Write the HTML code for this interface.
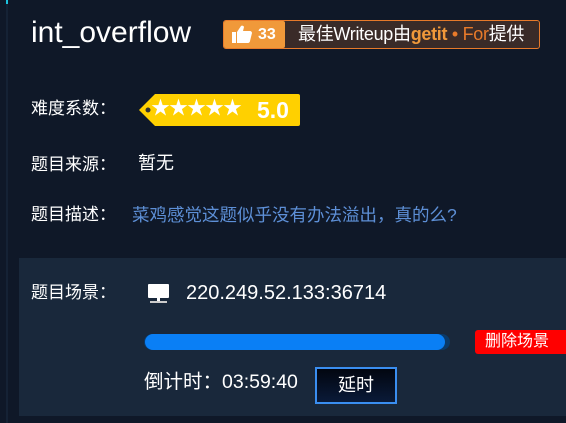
<!DOCTYPE html><html><head><meta charset="utf-8"><style>
body{margin:0;width:566px;height:423px;background:#0f1828;font-family:"Liberation Sans","Noto Sans CJK SC",sans-serif;color:#fff;position:relative;overflow:hidden}
.a{position:absolute;white-space:nowrap;line-height:1.2}
</style></head><body>
<div class="a" style="left:6px;top:0;width:2px;height:423px;background:#152235"></div>
<div class="a" style="left:6px;top:0;width:2px;height:4px;background:#1cc4e0"></div>
<div class="a" style="left:31px;top:15px;font-size:30px;">int_overflow</div>
<div class="a" style="left:223px;top:20px;width:317px;height:29px;border:1px solid #e87a2a;border-radius:3px;background:#3a2b28;box-sizing:border-box"></div>
<div class="a" style="left:224px;top:21px;width:61px;height:27px;background:#f0993a;border-radius:2px"></div>
<svg class="a" style="left:231px;top:24px" width="22" height="20" viewBox="0 0 22 20"><path d="M1 8h4v11H1z M6 8l4-6c1-1 3 0 3 1l-1 4h7c1 0 2 1 2 2l-2 8c0 1-1 2-2 2H6z" fill="#fff"/></svg>
<div class="a" style="left:258px;top:25px;font-size:16px;font-weight:bold">33</div>
<div class="a" style="left:298px;top:24px;font-size:18px;letter-spacing:-0.3px">最佳Writeup由<b style="color:#f0993a">getit</b><span style="color:#e87a2a"> • For</span>提供</div>
<div class="a" style="left:31px;top:99px;font-size:17px;">难度系数：</div>
<svg class="a" style="left:138px;top:94px" width="162" height="34"><path d="M17 0H160a2 2 0 0 1 2 2V30a2 2 0 0 1-2 2H17L1 16z" fill="#ffd000"/><circle cx="10" cy="16" r="2.5" fill="#333"/></svg>
<div class="a" style="left:151px;top:98px;font-size:19px;color:#fff;letter-spacing:-1px">★★★★★</div>
<div class="a" style="left:257px;top:97px;font-size:23px;font-weight:bold">5.0</div>
<div class="a" style="left:31px;top:155px;font-size:17px;">题目来源：</div>
<div class="a" style="left:138px;top:153px;font-size:18px;">暂无</div>
<div class="a" style="left:31px;top:205px;font-size:17px;">题目描述：</div>
<div class="a" style="left:132px;top:205px;font-size:17.5px;color:#5d8fd6">菜鸡感觉这题似乎没有办法溢出，真的么?</div>
<div class="a" style="left:19px;top:258px;width:547px;height:158px;background:#19283b"></div>
<div class="a" style="left:31px;top:283px;font-size:17px;">题目场景：</div>
<svg class="a" style="left:147px;top:284px" width="26" height="20"><rect x="1" y="0" width="21" height="14" rx="1" fill="#fff"/><rect x="10" y="14" width="3" height="3" fill="#fff"/><rect x="3" y="17" width="17" height="2" fill="#ccc"/></svg>
<div class="a" style="left:186px;top:281px;font-size:20px;">220.249.52.133:36714</div>
<div class="a" style="left:144px;top:334px;width:306px;height:16px;border-radius:8px;background:#0a3a6a"></div>
<div class="a" style="left:145px;top:334px;width:300px;height:16px;border-radius:8px;background:#0a7ff5"></div>
<div class="a" style="left:475px;top:330px;width:91px;height:24px;background:#f00;border-radius:3px 0 0 3px;font-size:16px;line-height:24px;text-indent:10px">删除场景</div>
<div class="a" style="left:144px;top:371px;font-size:19.5px;">倒计时：03:59:40</div>
<div class="a" style="left:315px;top:367px;width:82px;height:37px;box-sizing:border-box;border:2px solid #3a8ef0;background:linear-gradient(#020610,#0a1a38);font-size:18px;text-align:center;line-height:33px">延时</div>
</body></html>
